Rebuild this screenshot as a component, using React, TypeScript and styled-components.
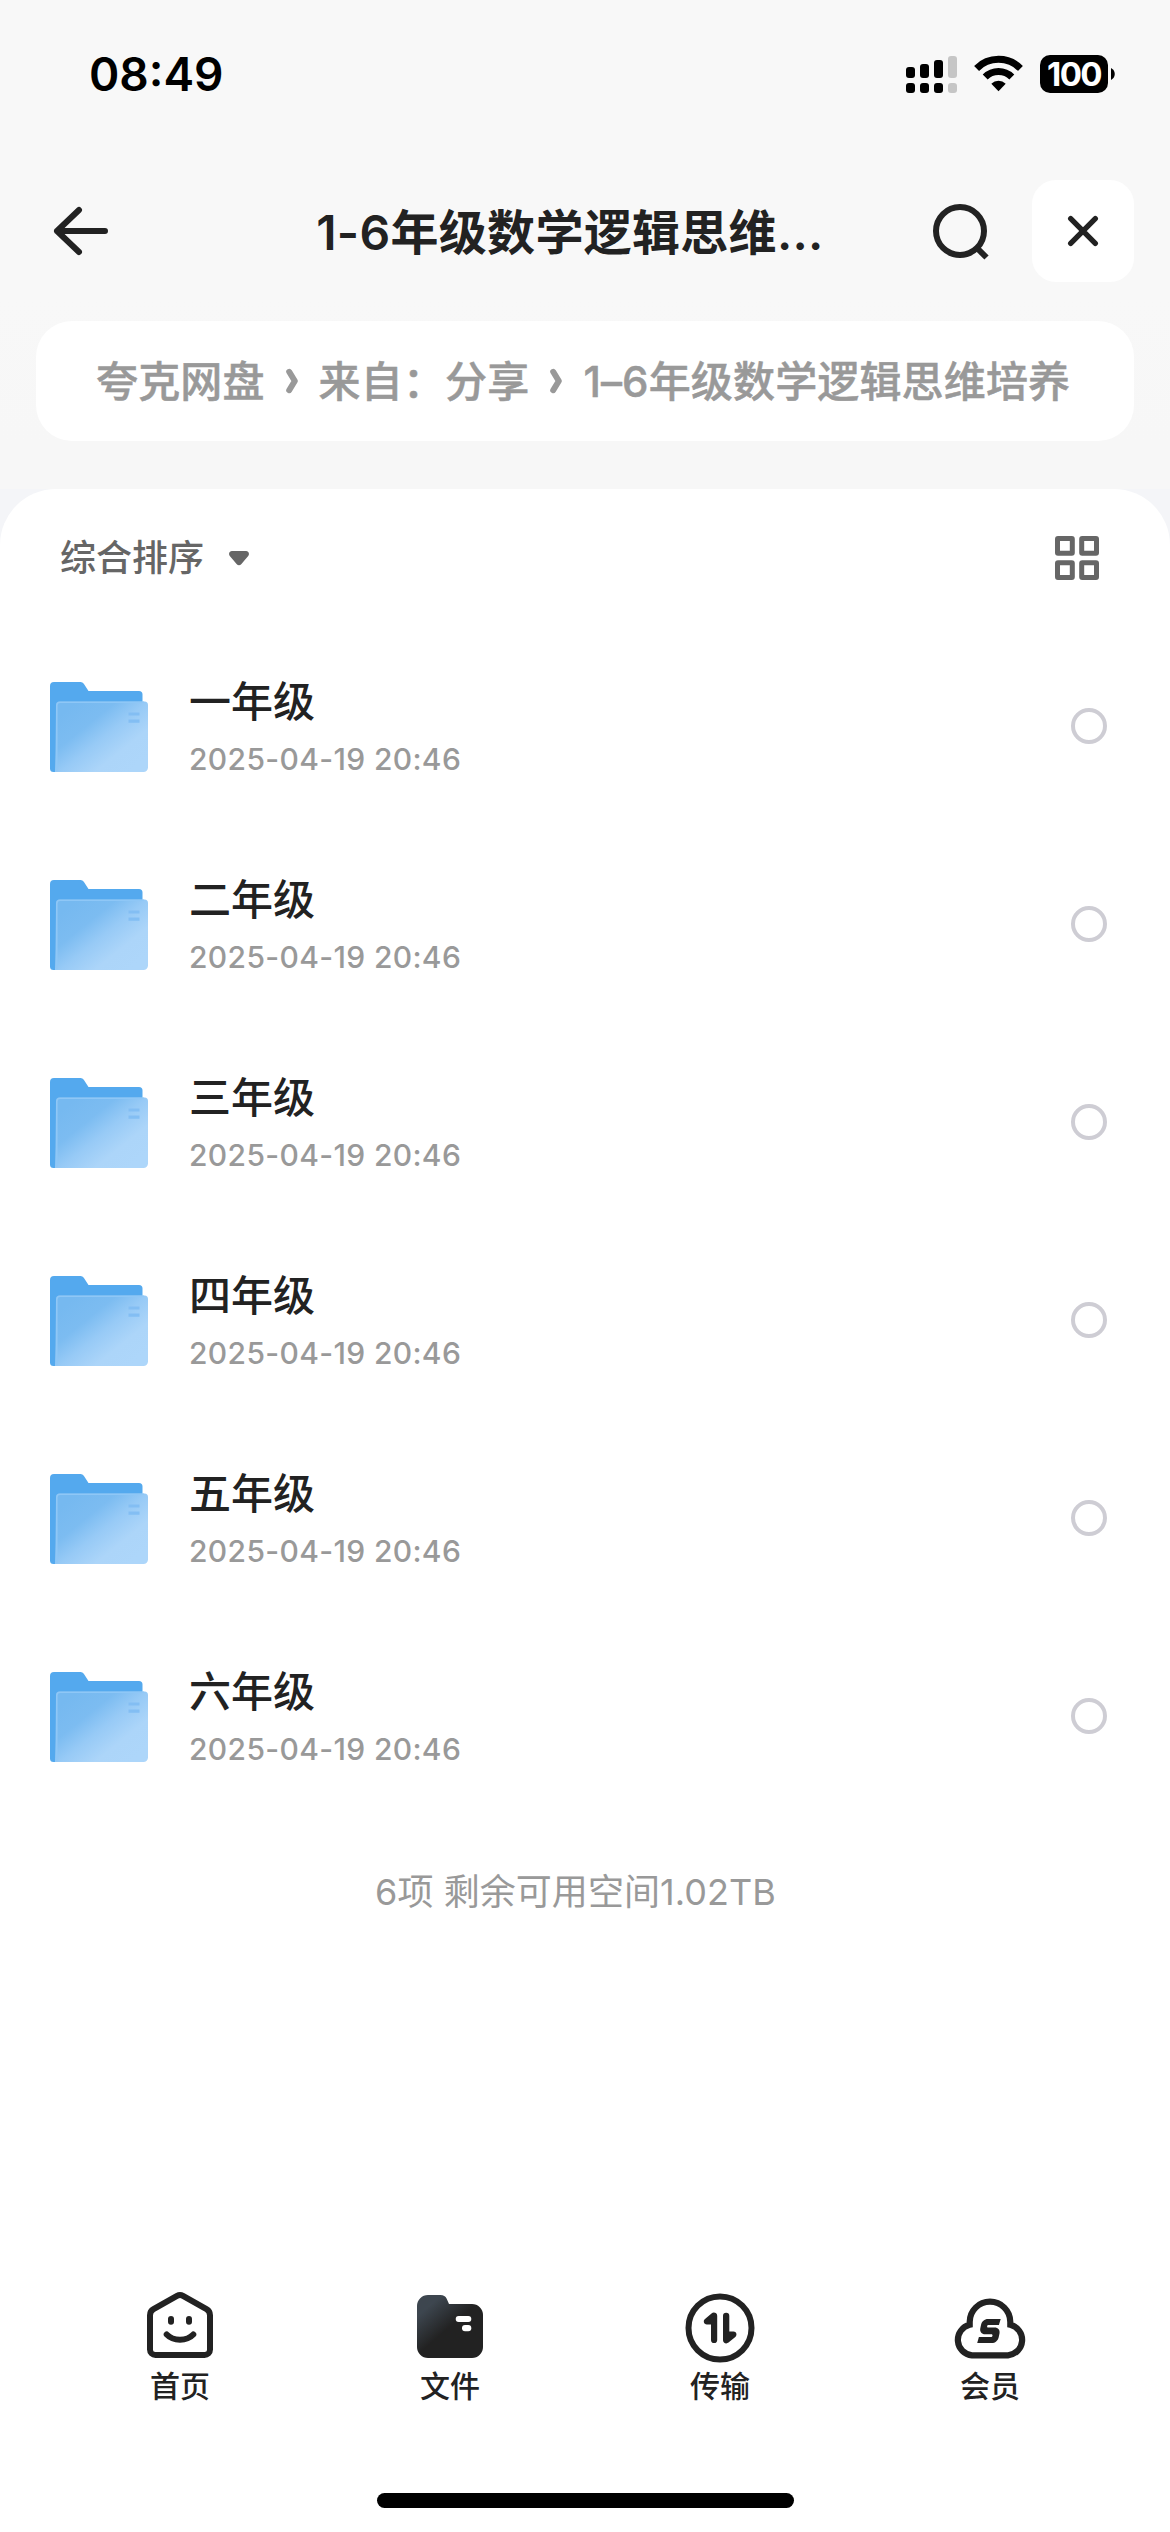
import React from "react";
import styled, { createGlobalStyle } from "styled-components";

const GlobalStyle = createGlobalStyle`
  *, *::before, *::after { box-sizing: border-box; }
  html, body { margin: 0; padding: 0; }
  body {
    background: #fff;
    color: #222;
    font-family: Inter, "Noto Sans CJK SC", sans-serif;
  }
  svg { display: block; flex: none; }
`;

const Screen = styled.div`
  width: 1170px;
  height: 2532px;
  display: flex;
  flex-direction: column;
  overflow: hidden;
  background: #fff;
`;

const Top = styled.div`
  background: linear-gradient(#f8f8f8 300px, #f7f7f7 440px);
  flex: none;
  height: 489px;
`;

const StatusBar = styled.div`
  height: 148px;
  padding: 0 55px 0 89px;
  display: flex;
  align-items: center;
  justify-content: space-between;
`;

const Clock = styled.div`
  font-size: 46px;
  font-weight: 600;
  line-height: 60px;
  color: #000;
`;

const StatusIcons = styled.div`
  display: flex;
  align-items: center;
  gap: 17px;
`;

const Battery = styled.div`
  display: flex;
  align-items: center;
  gap: 3px;
`;

const BatteryBody = styled.div`
  width: 68px;
  height: 38px;
  border-radius: 10px;
  background: #000;
  color: #fff;
  font-size: 33px;
  font-weight: 700;
  letter-spacing: -1.6px;
  line-height: 38px;
  text-align: center;
`;

const NavBar = styled.div`
  height: 166px;
  padding: 0 36px 0 51px;
  display: flex;
  align-items: center;
`;

const IconButton = styled.button`
  width: 60px;
  height: 60px;
  padding: 0;
  border: 0;
  background: none;
  display: flex;
  align-items: center;
  justify-content: center;
`;

const Title = styled.h1`
  flex: 1;
  margin: 0;
  padding: 3px 12px 0 111px;
  text-align: center;
  font-size: 48px;
  font-weight: 600;
  line-height: 60px;
  letter-spacing: 0.3px;
  white-space: nowrap;
`;

const CloseButton = styled(IconButton)`
  width: 102px;
  height: 102px;
  margin-left: 42px;
  border-radius: 24px;
  background: #fff;
`;

const Breadcrumb = styled.nav`
  margin: 7px 36px 0;
  height: 120px;
  padding: 0 60px;
  border-radius: 36px;
  background: #fff;
  display: flex;
  align-items: center;
  color: #999;
  font-size: 42px;
  font-weight: 500;
  line-height: 60px;
  white-space: nowrap;
  -webkit-text-stroke: 0.5px #999;
`;

const Crumb = styled.span`
  padding-top: 2px;
  letter-spacing: 0.15px;
`;

const Separator = styled.svg`
  margin: 0 21px;
`;

const PanelBackdrop = styled.div`
  flex: 1;
  display: flex;
  background: linear-gradient(#f4f5f8 0, #f4f5f8 80px, #fff 80px);
`;

const Panel = styled.main`
  flex: 1;
  display: flex;
  flex-direction: column;
  border-radius: 56px 56px 0 0;
  background: #fff;
`;

const Toolbar = styled.div`
  height: 138px;
  padding: 0 71px 0 60px;
  display: flex;
  align-items: center;
  justify-content: space-between;
`;

const Sort = styled.div`
  display: flex;
  align-items: center;
  gap: 25px;
  color: #666;
  font-size: 36px;
  font-weight: 500;
  line-height: 48px;
`;

const FileList = styled.ul`
  margin: 0;
  padding: 0;
  list-style: none;
`;

const FileRow = styled.li`
  height: 198px;
  padding: 0 63px 0 50px;
  display: flex;
  align-items: center;

  & > svg {
    margin-top: 2px;
  }
`;

const FileText = styled.div`
  flex: 1;
  margin-left: 41px;
  padding-top: 6px;
  display: flex;
  flex-direction: column;
`;

const FileName = styled.span`
  font-size: 42px;
  font-weight: 500;
  line-height: 60px;
`;

const FileDate = styled.span`
  font-size: 30px;
  font-weight: 500;
  line-height: 54px;
  letter-spacing: 0.35px;
  color: #999;
`;

const Radio = styled.span`
  width: 36px;
  height: 36px;
  border: 4px solid #cecdd4;
  border-radius: 50%;
`;

const Summary = styled.p`
  margin: 53px 0 0;
  padding-right: 19px;
  text-align: center;
  font-size: 36px;
  line-height: 48px;
  letter-spacing: 0.05px;
  color: #999;
`;

const TabBar = styled.nav`
  height: 241px;
  margin-top: auto;
  padding: 0 45px;
  display: flex;
`;

const Tab = styled.a`
  flex: 1;
  display: flex;
  flex-direction: column;
  align-items: center;
  gap: 1px;
  font-size: 30px;
  font-weight: 500;
  line-height: 44px;
`;

const HomeIndicator = styled.div`
  flex: none;
  width: 417px;
  height: 15px;
  margin: -39px auto 24px;
  border-radius: 8px;
  background: #000;
`;

const SignalIcon = () => (
  <svg width="51" height="38" viewBox="0 0 51 38">
    <rect x="0" y="12" width="9" height="11" rx="3" />
    <rect x="14" y="9" width="9" height="14" rx="3" />
    <rect x="28" y="5" width="9" height="18" rx="3" />
    <rect x="42" y="1" width="9" height="22" rx="3" fill="#c6c6c6" />
    <rect x="0" y="28" width="9" height="10" rx="3" />
    <rect x="14" y="28" width="9" height="10" rx="3" />
    <rect x="28" y="28" width="9" height="10" rx="3" />
    <rect x="42" y="28" width="9" height="10" rx="3" fill="#c6c6c6" />
  </svg>
);

const WifiIcon = () => (
  <svg width="49" height="38" viewBox="0 0 49 38">
    <g fill="none" stroke="#000" strokeWidth="7">
      <path d="M2.6 13.4a31 31 0 0 1 43.8 0" />
      <path d="M11.2 22a18.8 18.8 0 0 1 26.6 0" />
    </g>
    <path d="M24.5 36.2l-7.2-7.4a10.3 10.3 0 0 1 14.4 0z" />
  </svg>
);

const BackIcon = () => (
  <svg width="60" height="60" viewBox="0 0 60 60" fill="none" stroke="#222" strokeWidth="6" strokeLinecap="round" strokeLinejoin="round">
    <path d="M54 30H6M28 9L6 30l22 21" />
  </svg>
);

const SearchIcon = () => (
  <svg width="60" height="60" viewBox="0 0 60 60" fill="none" stroke="#222" strokeWidth="6">
    <circle cx="30" cy="30" r="24" />
    <path d="M46.5 46.5l10 10" />
  </svg>
);

const CloseIcon = () => (
  <svg width="36" height="36" viewBox="0 0 36 36" fill="none" stroke="#222" strokeWidth="5.4" strokeLinecap="round">
    <path d="M5.7 5.7l24.6 24.6M30.3 5.7L5.7 30.3" />
  </svg>
);

const ChevronSeparator = () => (
  <Separator width="12" height="28" viewBox="0 0 12 28" fill="none" stroke="#999" strokeWidth="6" strokeLinecap="round" strokeLinejoin="round">
    <path d="M3.200 4.800L8.800 14l-5.600 9.200" />
  </Separator>
);

const CaretIcon = () => (
  <svg width="20" height="16" viewBox="0 0 20 16" fill="#666">
    <path d="M3 1h14c2.700 0 3.800 3 2.200 4.900l-7 8.300a2.800 2.800 0 0 1-4.400 0L.8 5.900C-.8 4 .3 1 3 1z" />
  </svg>
);

const GridIcon = () => (
  <svg width="44" height="44" viewBox="0 0 44 44" fill="none" stroke="#666" strokeWidth="5">
    <rect x="2.500" y="2.500" width="14.800" height="14.800" rx="0.500" />
    <rect x="26.700" y="2.500" width="14.800" height="14.800" rx="0.500" />
    <rect x="2.500" y="26.700" width="14.800" height="14.800" rx="0.500" />
    <rect x="26.700" y="26.700" width="14.800" height="14.800" rx="0.500" />
  </svg>
);

const FolderIcon = () => (
  <svg width="98" height="90" viewBox="0 0 98 90">
    <defs>
      <linearGradient id="folderFront" x1="0.100" y1="0.150" x2="0.900" y2="0.900">
        <stop offset="0" stopColor="#76b9f0" />
        <stop offset="0.280" stopColor="#7cbcf1" />
        <stop offset="0.500" stopColor="#97caf6" />
        <stop offset="0.750" stopColor="#acd5f9" />
        <stop offset="1" stopColor="#add6fa" />
      </linearGradient>
    </defs>
    <path d="M0 4a4 4 0 0 1 4-4h26.500a4 4 0 0 1 3.300 1.700L38.500 9H89a3.500 3.500 0 0 1 3.500 3.500V60L6 90H3.500A3.500 3.500 0 0 1 0 86.500z" fill="#54a9ee" />
    <path d="M6 23a3.500 3.500 0 0 1 3.500-3.500h85A3.500 3.500 0 0 1 98 23v62.500a4.500 4.500 0 0 1-4.500 4.500H5z" fill="url(#folderFront)" />
    <path d="M6.800 89V23.500a3.200 3.200 0 0 1 3.200-3.200h84" fill="none" stroke="#8fc7f6" strokeWidth="1.600" />
    <path d="M78.500 32h11M78.500 39.200h11" stroke="#83bef3" strokeWidth="3.200" />
  </svg>
);

const HomeTabIcon = () => (
  <svg width="72" height="72" viewBox="0 0 72 72" fill="none" stroke="#222" strokeWidth="6" strokeLinecap="round">
    <path d="M6 24.200a7 7 0 0 1 3.500-6L33 4.900a6 6 0 0 1 6 0l23.500 13.300a7 7 0 0 1 3.500 6V58.500a5.500 5.500 0 0 1-5.500 5.500h-49A5.500 5.500 0 0 1 6 58.500z" />
    <path d="M22.700 43.500c6.500 6.900 20.100 6.900 26.600 0M27 28v2.700M45 28v2.700" />
  </svg>
);

const FilesTabIcon = () => (
  <svg width="72" height="72" viewBox="0 0 72 72">
    <defs>
      <linearGradient id="filesFill" x1="0.100" y1="0.100" x2="0.480" y2="0.520">
        <stop offset="0.200" stopColor="#3d464f" />
        <stop offset="1" stopColor="#222" />
      </linearGradient>
    </defs>
    <path d="M3 15A11 11 0 0 1 14 4h12.500c3 0 5 1.200 6.200 3.800L35 13h23a11 11 0 0 1 11 11v32a11 11 0 0 1-11 11H14A11 11 0 0 1 3 56z" fill="url(#filesFill)" />
    <rect x="41.700" y="25" width="15.600" height="6" rx="3" fill="#fff" />
    <rect x="48" y="34" width="9.300" height="6.200" rx="3" fill="#fff" />
  </svg>
);

const TransferTabIcon = () => (
  <svg width="72" height="72" viewBox="0 0 72 72" fill="#222">
    <circle cx="36" cy="37" r="31.500" fill="none" stroke="#222" strokeWidth="6" />
    <path d="M27.500 22.400c2.200-1.700 5.700-.5 5.700 2.400V49a3 3 0 0 1-6.200 0V33.400h-4.200c-3 0-4-3.600-1.800-5.400z" />
    <path d="M44.500 51.600c-2.200 1.700-5.500.5-5.500-2.400V24.800a3.100 3.100 0 0 1 6.300 0V40.600h4.200c3 0 4 3.600 1.800 5.400z" />
  </svg>
);

const MemberTabIcon = () => (
  <svg width="72" height="72" viewBox="0 0 72 72" fill="none" stroke="#222" strokeWidth="6.200">
    <path d="M18 64.300H54A15.500 15.500 0 0 0 56.300 33.800V31A20.300 20.300 0 0 0 15.700 31V33.800A15.500 15.500 0 0 0 18 64.300z" />
    <path d="M46.700 28L44.900 34H34.600c-.8 0-1.400.5-1.500 1.200s.3 1.300 1.100 1.300h6.300c3.700 0 5.700 2.600 5 6l-.8 3.700c-.8 3.500-3.600 5.800-7 5.800H23.200L24.900 46h12c.8 0 1.500-.5 1.600-1.300s-.3-1.400-1.100-1.400h-6.200c-3.700 0-5.600-2.700-4.900-6l.7-3.400C27.700 30.400 30.500 28 34 28z" fill="#222" stroke="none" />
  </svg>
);

const files = ["一年级", "二年级", "三年级", "四年级", "五年级", "六年级"];
const crumbs = ["夸克网盘", "来自：分享", "1–6年级数学逻辑思维培养"];
const tabs = [
  { label: "首页", Icon: HomeTabIcon },
  { label: "文件", Icon: FilesTabIcon },
  { label: "传输", Icon: TransferTabIcon },
  { label: "会员", Icon: MemberTabIcon },
];

export default function App() {
  return (
    <Screen>
      <GlobalStyle />
      <Top>
        <StatusBar>
          <Clock>08:49</Clock>
          <StatusIcons>
            <SignalIcon />
            <WifiIcon />
            <Battery>
              <BatteryBody>100</BatteryBody>
              <svg width="4" height="12" viewBox="0 0 4 12">
                <path d="M0 0c5 2.500 5 9.500 0 12z" />
              </svg>
            </Battery>
          </StatusIcons>
        </StatusBar>
        <NavBar>
          <IconButton aria-label="返回"><BackIcon /></IconButton>
          <Title>1-6年级数学逻辑思维...</Title>
          <IconButton aria-label="搜索"><SearchIcon /></IconButton>
          <CloseButton aria-label="关闭"><CloseIcon /></CloseButton>
        </NavBar>
        <Breadcrumb>
          {crumbs.map((crumb, i) => (
            <React.Fragment key={crumb}>
              {i > 0 && <ChevronSeparator />}
              <Crumb>{crumb}</Crumb>
            </React.Fragment>
          ))}
        </Breadcrumb>
      </Top>
      <PanelBackdrop>
        <Panel>
          <Toolbar>
            <Sort>
              综合排序
              <CaretIcon />
            </Sort>
            <GridIcon />
          </Toolbar>
          <FileList>
            {files.map((name) => (
              <FileRow key={name}>
                <FolderIcon />
                <FileText>
                  <FileName>{name}</FileName>
                  <FileDate>2025-04-19 20:46</FileDate>
                </FileText>
                <Radio />
              </FileRow>
            ))}
          </FileList>
          <Summary>6项 剩余可用空间1.02TB</Summary>
          <TabBar>
            {tabs.map(({ label, Icon }) => (
              <Tab key={label}>
                <Icon />
                {label}
              </Tab>
            ))}
          </TabBar>
        </Panel>
      </PanelBackdrop>
      <HomeIndicator />
    </Screen>
  );
}
